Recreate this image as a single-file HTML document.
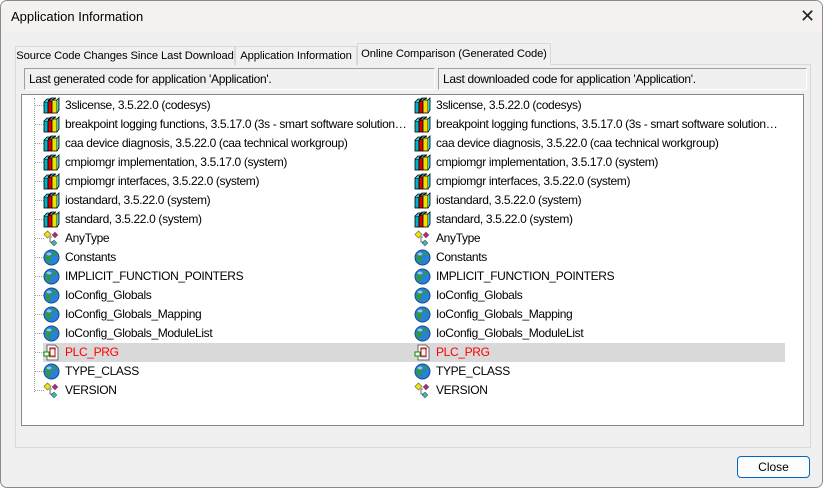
<!DOCTYPE html>
<html><head><meta charset="utf-8"><style>
*{margin:0;padding:0;box-sizing:border-box}
body{width:823px;height:488px;overflow:hidden;background:#fff;font-family:"Liberation Sans",sans-serif;font-size:12px;color:#000;position:relative}
.win{position:absolute;left:0;top:0;width:823px;height:488px;background:#f0f0f0;border:1px solid #8a8a8a;border-radius:7px;overflow:hidden}
.title{position:absolute;left:0;top:0;width:100%;height:31px;background:#f5f1f1}
.title span{position:absolute;left:10px;top:8px;font-size:13px}
.x{position:absolute;left:799px;top:5px;font-size:18px;font-weight:100;color:#222}
.tab{position:absolute;top:45px;height:19px;border:1px solid #d9d9d9;border-bottom:none;background:#f0f0f0;padding:3px 0 0 0;text-align:center;white-space:nowrap;font-size:11.2px;letter-spacing:-0.1px}
.panel{position:absolute;left:14px;top:63px;width:796px;height:384px;border:1px solid #d9d9d9;background:#f0f0f0}
.hdr{position:absolute;top:67px;height:22px;border:1px solid #a0a0a0;border-right-color:#fff;border-bottom-color:#fff;padding:3px 4px;letter-spacing:-0.3px;white-space:nowrap}
.list{position:absolute;left:20px;top:93px;width:783px;height:332px;background:#fff;border:1px solid #828790}
.row{position:absolute;height:19px;line-height:19px;white-space:nowrap;overflow:hidden;text-overflow:ellipsis;letter-spacing:-0.35px}
.ic{position:absolute;width:17px;height:17px}
.hl{position:absolute;left:21px;top:248px;width:742px;height:19px;background:#d9d9d9}
.btn{position:absolute;left:736px;top:455px;width:73px;height:22px;border:1px solid #0067c0;border-radius:4px;background:#fdfdfd;text-align:center;line-height:20px}
.vline{position:absolute;left:12px;top:3px;height:294px;border-left:1px dotted #a0a0a0}
.hline{position:absolute;left:13px;width:9px;border-top:1px dotted #a0a0a0}
</style></head><body>
<svg width="0" height="0" style="position:absolute">
<defs>
<symbol id="lib" viewBox="0 0 17 17">
<rect x="1" y="5" width="4" height="11" fill="#00b4c8" stroke="#000" stroke-width="0.8"/>
<rect x="5" y="4" width="4" height="12" fill="#e00000" stroke="#000" stroke-width="0.8"/>
<rect x="9" y="3" width="5" height="13" fill="#f0e000" stroke="#000" stroke-width="0.8"/>
<path d="M1 5l3-3h4l-3 3M5 4l3-3h5l-4 2M14 3l2-2v12l-2 3" fill="#30d0e0" stroke="#000" stroke-width="0.8"/>
</symbol>
<symbol id="glob" viewBox="0 0 17 17">
<circle cx="8.5" cy="8.5" r="7.5" fill="#2a7fd8" stroke="#124a90"/>
<path d="M3 6c2-2 4 0 5 2s-2 3-1 5-3 0-4-2zM9 3c3 0 5 2 5 4-2 0-3-2-5-1z" fill="#2e9a3a"/>
<ellipse cx="6" cy="5" rx="2.5" ry="1.5" fill="#a8d8ff" opacity=".8"/>
</symbol>
<symbol id="dut" viewBox="0 0 17 17">
<rect x="2" y="2" width="5" height="5" fill="#f0e800" stroke="#555" stroke-width=".6" transform="rotate(45 4.5 4.5)"/>
<rect x="10" y="3" width="4" height="4" fill="#c0208a" stroke="#555" stroke-width=".6" transform="rotate(45 12 5)"/>
<rect x="9" y="11" width="4" height="4" fill="#30c0c0" stroke="#555" stroke-width=".6" transform="rotate(45 11 13)"/>
<path d="M7 7v5h3M7 7h2" stroke="#444" fill="none" stroke-width=".8"/>
</symbol>
<symbol id="prg" viewBox="0 0 17 17">
<path d="M4 1h8l3 3v12H4z" fill="#fff" stroke="#666"/>
<path d="M6 5h7M6 13h7" stroke="#999"/>
<rect x="7" y="4" width="5" height="8" fill="none" stroke="#c00000"/>
<rect x="1" y="8" width="5" height="4" fill="#fff" stroke="#009000"/>
</symbol>
</defs></svg>
<div class="win">
<div class="title"><span>Application Information</span><div class="x">✕</div></div>
<div class="panel"></div>
<div class="tab" style="left:14px;width:220px">Source Code Changes Since Last Download</div>
<div class="tab" style="left:234px;width:122px">Application Information</div>
<div class="tab" style="left:356px;width:194px;top:42px;height:22px;padding-top:4px">Online Comparison (Generated Code)</div>
<div class="hdr" style="left:23px;width:411px">Last generated code for application 'Application'.</div>
<div class="hdr" style="left:437px;width:369px">Last downloaded code for application 'Application'.</div>
<div class="list">
<div class="hl"></div>
<div class="vline"></div>
<div id="rows"></div>
</div>
<div class="btn">Close</div>
</div>
<script>
var items=[["lib","3slicense, 3.5.22.0 (codesys)"],["lib","breakpoint logging functions, 3.5.17.0 (3s - smart software solutions gmbh)"],["lib","caa device diagnosis, 3.5.22.0 (caa technical workgroup)"],["lib","cmpiomgr implementation, 3.5.17.0 (system)"],["lib","cmpiomgr interfaces, 3.5.22.0 (system)"],["lib","iostandard, 3.5.22.0 (system)"],["lib","standard, 3.5.22.0 (system)"],["dut","AnyType"],["glob","Constants"],["glob","IMPLICIT_FUNCTION_POINTERS"],["glob","IoConfig_Globals"],["glob","IoConfig_Globals_Mapping"],["glob","IoConfig_Globals_ModuleList"],["prg","PLC_PRG"],["glob","TYPE_CLASS"],["dut","VERSION"]];
var h="";
items.forEach(function(it,i){var t=1+i*19;var red=it[0]=="prg"?"color:#ff0000;":"";
h+='<div class="hline" style="top:'+(t+9)+'px"></div>';
h+='<svg class="ic" style="left:21px;top:'+(t+1)+'px"><use href="#'+it[0]+'"/></svg>';
h+='<div class="row" style="left:43px;top:'+t+'px;width:343px;'+red+'">'+it[1]+'</div>';
h+='<svg class="ic" style="left:392px;top:'+(t+1)+'px"><use href="#'+it[0]+'"/></svg>';
h+='<div class="row" style="left:414px;top:'+t+'px;width:344px;'+red+'">'+it[1]+'</div>';});
document.getElementById("rows").innerHTML=h;
</script>
</body></html>
